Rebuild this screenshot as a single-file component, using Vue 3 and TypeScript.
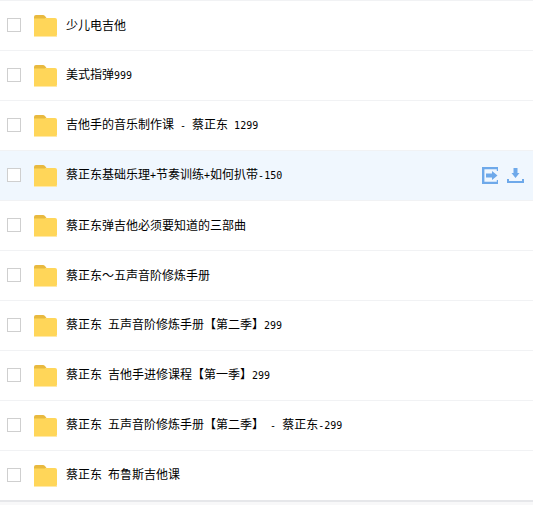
<script setup lang="ts">
interface Run { text: string; latin: boolean }
const names: string[] = [
  '少儿电吉他',
  '美式指弹999',
  '吉他手的音乐制作课 - 蔡正东 1299',
  '蔡正东基础乐理+节奏训练+如何扒带-150',
  '蔡正东弹吉他必须要知道的三部曲',
  '蔡正东～五声音阶修炼手册',
  '蔡正东 五声音阶修炼手册【第二季】299',
  '蔡正东 吉他手进修课程【第一季】299',
  '蔡正东 五声音阶修炼手册【第二季】 - 蔡正东-299',
  '蔡正东 布鲁斯吉他课',
]
function runs(s: string): Run[] {
  return (s.match(/[\x20-\x7e]+|[^\x20-\x7e]+/g) ?? []).map((text) => ({
    text,
    latin: /^[\x20-\x7e]/.test(text),
  }))
}
const hoverIndex = 3
</script>

<template>
  <div class="list">
    <div v-for="(name, i) in names" :key="i" class="row" :class="{ hover: i === hoverIndex }">
      <span class="check"></span>
      <svg class="folder" width="23" height="22" viewBox="0 0 23 22">
        <path d="M0 2 Q0 0 2 0 H9 Q10 0 11 1 L12.5 3 H0 Z" fill="#e8b93f" />
        <path d="M0 3 H21 Q23 3 23 5 V20 Q23 21 22 21 H0 Z" fill="#ffd659" />
        <rect x="0" y="3" width="11" height="1" fill="#f2c94c" />
        <rect x="0" y="21" width="23" height="1" fill="#ffe9a8" />
      </svg>
      <span class="name"><span v-for="(r, j) in runs(name)" :key="j" :class="{ latin: r.latin }">{{ r.text }}</span></span>
      <div v-if="i === hoverIndex" class="actions">
        <svg width="16" height="17" viewBox="0 0 16 17">
          <path d="M16 4 V1 H1.2 V16 H16 V13" fill="none" stroke="#6ea9ea" stroke-width="2.4" />
          <path d="M4 6.5 H10 V4 L15.5 8.5 L10 13 V10.5 H4 Z" fill="#6ea9ea" />
        </svg>
        <svg width="17" height="17" viewBox="0 0 17 17">
          <path d="M6.5 1 H10.5 V6 H12.5 L8.5 11 L4.5 6 H6.5 Z" fill="#6ea9ea" />
          <path d="M1 12 V15 H16 V12" fill="none" stroke="#6ea9ea" stroke-width="2" />
        </svg>
      </div>
    </div>
    <div class="foot"></div>
  </div>
</template>

<style scoped>
.list {
  width: 533px;
  height: 505px;
  overflow: hidden;
  background: #fff;
  font-family: "Noto Sans CJK SC", "DejaVu Sans Mono", monospace;
  font-size: 12px;
  color: #000;
}
.row {
  height: 50px;
  box-sizing: border-box;
  border-top: 1px solid #f1f2f4;
  padding: 0 0 1px 7px;
  display: flex;
  align-items: center;
}
.row.hover {
  background: #f0f7fe;
}
.check {
  width: 14px;
  height: 14px;
  box-sizing: border-box;
  border: 1px solid #cfcfcf;
  background: #fff;
  flex: none;
}
.folder {
  margin: 2px 0 0 13px;
  flex: none;
}
.name {
  margin-left: 9px;
  white-space: pre;
  line-height: 16px;
}
.latin {
  font-family: "DejaVu Sans Mono", monospace;
  font-size: 10px;
}
.actions {
  margin: 1px 0 0 auto;
  display: flex;
  gap: 9px;
  padding-right: 9px;
}
.foot {
  height: 5px;
  box-sizing: border-box;
  border-top: 2px solid #e6e7ea;
  background: #f8f8f9;
}
</style>
